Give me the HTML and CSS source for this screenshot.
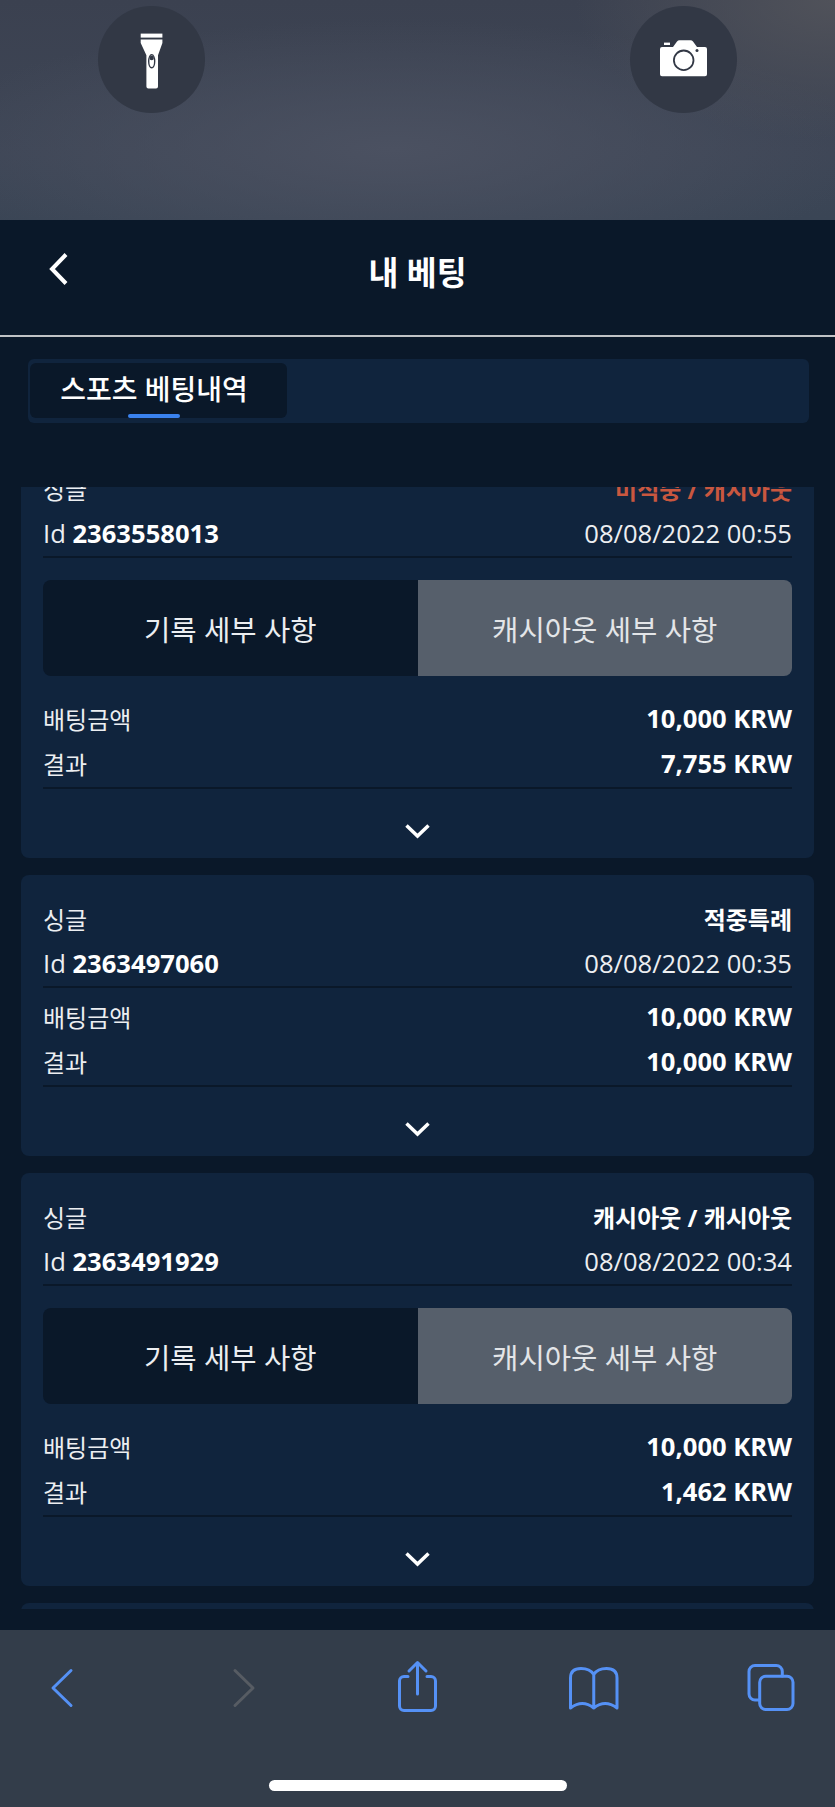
FILE: index.html
```html
<!DOCTYPE html>
<html lang="ko">
<head>
  <meta charset="UTF-8" />
  <meta name="viewport" content="width=device-width, initial-scale=1" />
  <title>내 베팅</title>
  <link rel="stylesheet" href="styles.css">
</head>
<body>
  <div class="camera-bar">
    <div class="round-btn">
      <svg viewBox="0 0 107 107" width="107" height="107">
        <rect x="42.7" y="27.6" width="21.7" height="4" fill="#fff"/>
        <path d="M42.7 33.6H64.4V37L60 49.3V80.6a2 2 0 0 1-2 2H50.4a2 2 0 0 1-2-2V49.3L42.7 37Z" fill="#fff"/>
        <ellipse cx="53.7" cy="55.3" rx="3" ry="6.5" fill="#fff" stroke="#323845" stroke-width="1.4"/>
        <circle cx="53.7" cy="52" r="2.2" fill="#323845"/>
      </svg>
    </div>
    <div class="round-btn">
      <svg viewBox="0 0 107 107" width="107" height="107">
        <rect x="34" y="36.6" width="6" height="2.4" fill="#fff"/>
        <path d="M32 41H43L47 35.5Q48 34.3 49.5 34.3H60.5Q62 34.3 63 35.5L67 41H75Q77 41 77 43V68.3Q77 70.3 75 70.3H32Q30 70.3 30 68.3V43Q30 41 32 41Z" fill="#fff"/>
        <circle cx="53.7" cy="54.3" r="9.8" fill="#fff" stroke="#323845" stroke-width="1.8"/>
        <circle cx="67" cy="44.6" r="1.5" fill="#323845"/>
      </svg>
    </div>
  </div>

  <header class="top-header">
    <svg class="back" viewBox="0 0 21 34" width="21" height="34">
      <path d="M18 2.5 4 17 18 31.5" fill="none" stroke="#fff" stroke-width="4"/>
    </svg>
    <h1>내 베팅</h1>
  </header>

  <div class="tabs-wrap">
    <div class="tabs">
      <div class="tab">스포츠 베팅내역</div>
    </div>
  </div>

  <main class="bet-list">
    <section class="bet-card first">
      <div class="row"><span>싱글</span><b class="lost">미적중 / 캐시아웃</b></div>
      <div class="row row-id"><span class="num">Id <b>2363558013</b></span><span class="num">08/08/2022 00:55</span></div>
      <div class="switch">
        <div class="switch-item">기록 세부 사항</div>
        <div class="switch-item selected">캐시아웃 세부 사항</div>
      </div>
      <div class="amounts">
        <div class="row"><span>배팅금액</span><b class="num">10,000 KRW</b></div>
        <div class="row"><span>결과</span><b class="num">7,755 KRW</b></div>
      </div>
      <div class="more">
        <svg viewBox="0 0 27 16" width="27" height="16"><path d="M2.500 2.500 13.500 13 24.500 2.500" fill="none" stroke="#fff" stroke-width="3.500"/></svg>
      </div>
    </section>

    <section class="bet-card">
      <div class="row"><span>싱글</span><b>적중특례</b></div>
      <div class="row row-id"><span class="num">Id <b>2363497060</b></span><span class="num">08/08/2022 00:35</span></div>
      <div class="amounts compact">
        <div class="row"><span>배팅금액</span><b class="num">10,000 KRW</b></div>
        <div class="row"><span>결과</span><b class="num">10,000 KRW</b></div>
      </div>
      <div class="more">
        <svg viewBox="0 0 27 16" width="27" height="16"><path d="M2.500 2.500 13.500 13 24.500 2.500" fill="none" stroke="#fff" stroke-width="3.500"/></svg>
      </div>
    </section>

    <section class="bet-card">
      <div class="row"><span>싱글</span><b>캐시아웃 / 캐시아웃</b></div>
      <div class="row row-id"><span class="num">Id <b>2363491929</b></span><span class="num">08/08/2022 00:34</span></div>
      <div class="switch">
        <div class="switch-item">기록 세부 사항</div>
        <div class="switch-item selected">캐시아웃 세부 사항</div>
      </div>
      <div class="amounts">
        <div class="row"><span>배팅금액</span><b class="num">10,000 KRW</b></div>
        <div class="row"><span>결과</span><b class="num">1,462 KRW</b></div>
      </div>
      <div class="more">
        <svg viewBox="0 0 27 16" width="27" height="16"><path d="M2.500 2.500 13.500 13 24.500 2.500" fill="none" stroke="#fff" stroke-width="3.500"/></svg>
      </div>
    </section>

    <section class="bet-card"></section>
  </main>

  <footer class="toolbar">
    <div class="tool-icons">
      <svg viewBox="0 0 64 64" width="64" height="64"><path d="M41 15.500 23 33 41 50.500" class="ico"/></svg>
      <svg viewBox="0 0 64 64" width="64" height="64"><path d="M28 15.500 46 33 28 50.500" class="ico off"/></svg>
      <svg viewBox="0 0 64 64" width="64" height="64">
        <path d="M24 21.500H20a4.500 4.500 0 0 0-4.500 4.500V51a4.500 4.500 0 0 0 4.500 4.500H47a4.500 4.500 0 0 0 4.500-4.500V26A4.500 4.500 0 0 0 47 21.500H43" class="ico"/>
        <path d="M33.500 39V8M25 16l8.500-8.500L42 16" class="ico"/>
      </svg>
      <svg viewBox="0 0 64 64" width="64" height="64">
        <path d="M9.500 53V23Q9.500 13.500 20 13.500 29 13.500 32.750 19.500 36.500 13.500 45.500 13.500 56 13.500 56 23V53Q44 44 32.750 53 21.500 44 9.500 53ZM32.750 19.500V53" class="ico"/>
      </svg>
      <svg viewBox="0 0 64 64" width="64" height="64">
        <rect x="20.700" y="21.200" width="33.300" height="33.300" rx="6" class="ico"/>
        <path d="M43.300 21V16.500a6 6 0 0 0-6-6H16a6 6 0 0 0-6 6V39a6 6 0 0 0 6 6H20" class="ico"/>
      </svg>
    </div>
    <div class="home-bar"></div>
  </footer>
</body>
</html>
```

FILE: styles.css
```css
:root {
  --color-bg: #0a1829;
  --color-card: #10243d;
  --color-text: #eceef1;
}

html, body {
  margin: 0;
  height: 1807px;
  overflow: hidden;
}

body {
  font-family: "Open Sans", "Noto Sans CJK KR", sans-serif;
  background-color: var(--color-bg);
  color: var(--color-text);
  font-size: 24px;
}

/* Kamera Leiste oben */
.camera-bar {
  height: 214px;
  padding: 6px 98px 0;
  display: flex;
  justify-content: space-between;
  align-items: flex-start;
  background:
    radial-gradient(ellipse 260px 140px at 100% 0, #50525a 0, rgba(80, 82, 90, 0) 100%),
    radial-gradient(ellipse 480px 130px at 47% 68%, #4b5161 0, rgba(75, 81, 97, 0) 100%),
    linear-gradient(#3b4150, #3e4656 70%, #3a4555);
}

.round-btn {
  width: 107px;
  height: 107px;
  border-radius: 50%;
  background-color: #323845;
}

.round-btn svg {
  display: block;
}

/* Header */
.top-header {
  height: 102px;
  padding: 0 48px 13px;
  display: grid;
  grid-template-columns: 1fr auto 1fr;
  align-items: center;
  border-bottom: 2px solid #bfc2c5;
}

.top-header h1 {
  margin: 0;
  grid-column: 2;
  grid-row: 1;
  font-size: 32.5px;
  font-weight: 700;
  color: #fff;
}

.back {
  grid-column: 1;
  grid-row: 1;
  margin-bottom: 4px;
}

/* Tabs */
.tabs-wrap {
  padding: 22px 26px 64px 28px;
}

.tabs {
  height: 56px;
  padding: 4px 2px;
  background-color: var(--color-card);
  border-radius: 6px;
}

.tab {
  width: 257px;
  height: 55px;
  padding-right: 9px;
  box-sizing: border-box;
  background-color: var(--color-bg);
  border-radius: 6px;
  text-align: center;
  font-size: 28px;
  font-weight: 500;
  line-height: 52px;
  color: #fff;
  position: relative;
}

.tab::after {
  content: "";
  position: absolute;
  left: 98px;
  bottom: 0;
  width: 52px;
  height: 4px;
  border-radius: 2px;
  background-color: #3a82ee;
}

/* Wett Liste */
.bet-list {
  height: 1122px;
  padding: 0 21px;
  overflow: hidden;
}

.bet-card {
  padding: 22px 22px 0;
  margin-bottom: 17px;
  background-color: var(--color-card);
  border-radius: 8px;
}

.bet-card.first {
  margin-top: -42px;
}

.row {
  height: 45px;
  padding-bottom: 2px;
  box-sizing: border-box;
  display: flex;
  justify-content: space-between;
  align-items: center;
}

.row b {
  font-weight: 700;
  color: #fff;
}

.row .num {
  font-size: 25.6px;
}

.row .lost {
  color: #c9573f;
}

.row-id {
  height: 46px;
  padding-bottom: 1px;
  border-bottom: 2px solid var(--color-bg);
}

.switch {
  height: 96px;
  margin-top: 22px;
  display: flex;
  border-radius: 8px;
  overflow: hidden;
  font-size: 28.6px;
}

.switch-item {
  flex: 1;
  display: flex;
  align-items: center;
  justify-content: center;
  background-color: #0a1829;
}

.switch-item.selected {
  background-color: #565f6b;
  color: #e3e5e8;
}

.amounts {
  margin-top: 21px;
  border-bottom: 2px solid var(--color-bg);
}

.amounts.compact {
  margin-top: 7px;
}

.more {
  height: 69px;
  padding-top: 34px;
  box-sizing: border-box;
  text-align: center;
}

.more svg {
  display: inline-block;
  vertical-align: top;
}

/* Browser Leiste unten */
.toolbar {
  margin-top: 21px;
  height: 178px;
  padding-top: 25px;
  box-sizing: border-box;
  background-color: #333d4a;
}

.tool-icons {
  display: flex;
  justify-content: space-between;
  padding: 0 32.5px 0 29.5px;
}

.ico {
  fill: none;
  stroke: #5591f5;
  stroke-width: 3;
  stroke-linecap: round;
  stroke-linejoin: round;
}

.ico.off {
  stroke: #575c63;
}

.home-bar {
  width: 298px;
  height: 11px;
  margin: 61px auto 0;
  border-radius: 6px;
  background-color: #fff;
}
```
